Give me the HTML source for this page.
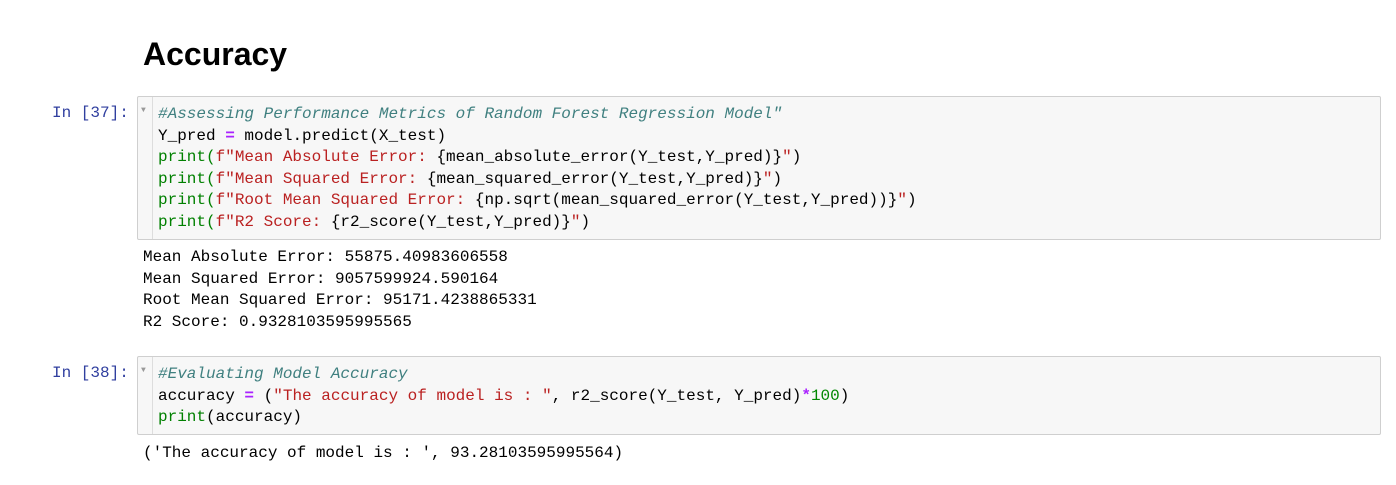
<!DOCTYPE html><html><head><style>
body{margin:0;background:#fff;width:1396px;height:485px;position:relative;overflow:hidden;font-family:"Liberation Mono","DejaVu Sans Mono",monospace;}
h1{position:absolute;left:143px;top:36px;margin:0;font:bold 32px "Liberation Sans",sans-serif;color:#000}
.p{position:absolute;left:52px;color:#303f9f;font-size:16px;line-height:21.6px}
.box{position:absolute;left:137px;width:1242px;background:#f7f7f7;border:1px solid #cfcfcf;border-radius:2px}
.g{position:absolute;left:14px;top:0;bottom:0;border-left:1px solid #ddd}
.ar{position:absolute;left:3px;top:9px;font-size:8px;color:#999}
pre{margin:0;font-family:inherit;font-size:16px;line-height:21.6px;white-space:pre}
.code{position:absolute;left:20px;top:7px}
.out{position:absolute;left:143px;color:#000}
.c{color:#408080;font-style:italic}.k{color:#008000}.s{color:#ba2121}.o{color:#aa22ff;font-weight:bold}.n{color:#080}
</style></head><body>
<h1>Accuracy</h1>
<div class="p" style="top:103px">In&nbsp;[37]:</div>
<div class="box" style="top:96px;height:142px"><div class="g"></div><div class="ar">▼</div>
<pre class="code"><span class="c">#Assessing Performance Metrics of Random Forest Regression Model"</span>
Y_pred <span class="o">=</span> model.predict(X_test)
<span class="k">print(</span><span class="s">f"Mean Absolute Error: </span>{mean_absolute_error(Y_test,Y_pred)}<span class="s">"</span>)
<span class="k">print(</span><span class="s">f"Mean Squared Error: </span>{mean_squared_error(Y_test,Y_pred)}<span class="s">"</span>)
<span class="k">print(</span><span class="s">f"Root Mean Squared Error: </span>{np.sqrt(mean_squared_error(Y_test,Y_pred))}<span class="s">"</span>)
<span class="k">print(</span><span class="s">f"R2 Score: </span>{r2_score(Y_test,Y_pred)}<span class="s">"</span>)</pre></div>
<pre class="out" style="top:247px">Mean Absolute Error: 55875.40983606558
Mean Squared Error: 9057599924.590164
Root Mean Squared Error: 95171.4238865331
R2 Score: 0.9328103595995565</pre>
<div class="p" style="top:363px">In&nbsp;[38]:</div>
<div class="box" style="top:356px;height:77px"><div class="g"></div><div class="ar">▼</div>
<pre class="code"><span class="c">#Evaluating Model Accuracy</span>
accuracy <span class="o">=</span> (<span class="s">"The accuracy of model is : "</span>, r2_score(Y_test, Y_pred)<span class="o">*</span><span class="n">100</span>)
<span class="k">print</span>(accuracy)</pre></div>
<pre class="out" style="top:443px">('The accuracy of model is : ', 93.28103595995564)</pre>
</body></html>
